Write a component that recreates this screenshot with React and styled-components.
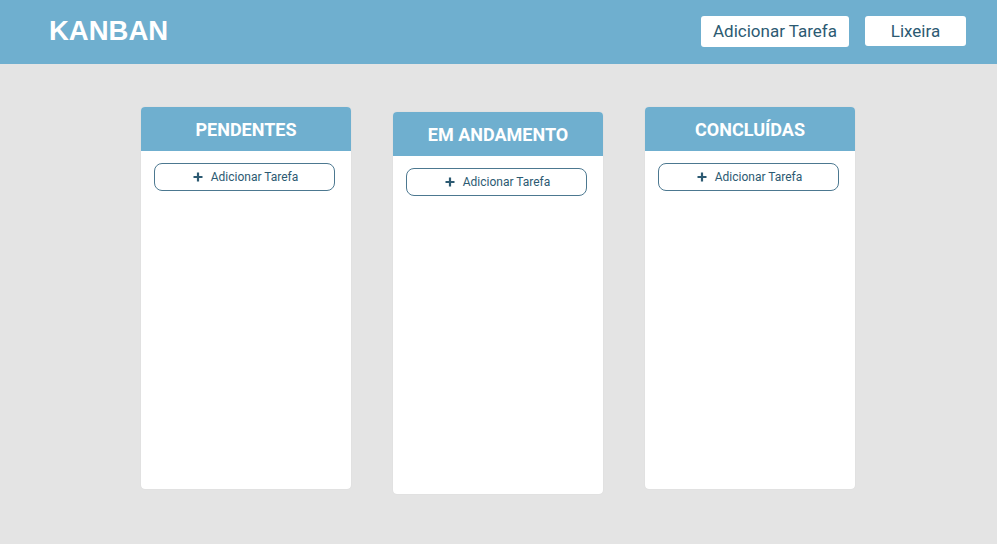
import React from 'react'
import styled, { createGlobalStyle } from 'styled-components'

const GlobalStyle = createGlobalStyle`
  body {
    margin: 0;
    background: #e4e4e4;
    font-family: Roboto, "Liberation Sans", sans-serif;
  }
`

const Page = styled.div`
  min-height: 544px;
  background: #e4e4e4;
`

const Header = styled.header`
  height: 64px;
  background: #6fafcf;
  display: flex;
  align-items: center;
  justify-content: space-between;
  padding: 0 31px 0 49px;
  box-sizing: border-box;
`

const Logo = styled.h1`
  margin: 0;
  color: #ffffff;
  font-family: "Liberation Sans", Arial, sans-serif;
  font-weight: 700;
  font-size: 27.5px;
  position: relative;
  top: -1px;
`

const Actions = styled.div`
  display: flex;
  gap: 16px;
  align-items: center;
  margin-top: -2px;
`

const HeaderButton = styled.button`
  height: ${(p) => p.$h || 31}px;
  width: ${(p) => p.$w}px;
  background: #ffffff;
  border: none;
  border-radius: 3px;
  color: #2c5a72;
  font-family: Roboto, sans-serif;
  font-size: 17px;
  padding: 0;
  cursor: pointer;
`

const Board = styled.main`
  display: flex;
  justify-content: center;
  align-items: flex-start;
  gap: 42px;
  padding: 43px 1px 0 0;
`

const Column = styled.section`
  width: 210px;
  height: 382px;
  background: #ffffff;
  border-radius: 4px;
  overflow: hidden;
  margin-top: ${(p) => p.$offset || 0}px;
  box-shadow: 0 0 1px rgba(0, 0, 0, 0.12);
`

const ColumnTitle = styled.h2`
  margin: 0;
  height: 44px;
  padding-top: 1px;
  box-sizing: border-box;
  background: #6fafcf;
  color: #ffffff;
  font-family: Roboto, sans-serif;
  font-weight: 700;
  font-size: 18px;
  display: flex;
  align-items: center;
  justify-content: center;
`

const AddButton = styled.button`
  margin: 12px 0 0 13px;
  width: 181px;
  height: 28px;
  background: #ffffff;
  border: 1px solid #4c7890;
  border-radius: 8px;
  color: #2c5a72;
  font-family: Roboto, sans-serif;
  font-size: 12px;
  display: flex;
  align-items: center;
  justify-content: center;
  gap: 8px;
  padding: 0 0 0 2px;
  cursor: pointer;
`

const Plus = () => (
  <svg width="10" height="10" viewBox="0 0 10 10">
    <path d="M5 0.5v9M0.5 5h9" stroke="#2c5a72" strokeWidth="2.2" />
  </svg>
)

const columns = [
  { title: 'PENDENTES', offset: 0 },
  { title: 'EM ANDAMENTO', offset: 5 },
  { title: 'CONCLUÍDAS', offset: 0 },
]

export default function App() {
  return (
    <Page>
      <GlobalStyle />
      <Header>
        <Logo>KANBAN</Logo>
        <Actions>
          <HeaderButton $w={148}>Adicionar Tarefa</HeaderButton>
          <HeaderButton $w={101} $h={30}>Lixeira</HeaderButton>
        </Actions>
      </Header>
      <Board>
        {columns.map((c) => (
          <Column key={c.title} $offset={c.offset}>
            <ColumnTitle>{c.title}</ColumnTitle>
            <AddButton>
              <Plus />
              Adicionar Tarefa
            </AddButton>
          </Column>
        ))}
      </Board>
    </Page>
  )
}
